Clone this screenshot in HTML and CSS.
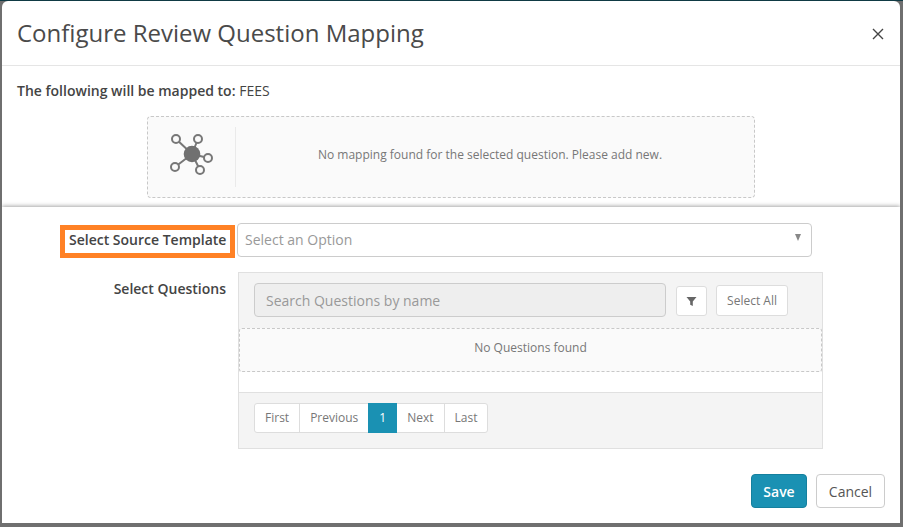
FILE: index.html
```html
<!DOCTYPE html>
<html lang="en">
<head>
<meta charset="utf-8">
<title>Configure Review Question Mapping</title>
<link rel="stylesheet" href="styles.css">
</head>
<body>
<div class="modal">
  <header class="modal-header">
    <h1 class="modal-title">Configure Review Question Mapping</h1>
    <svg class="close" width="12" height="12" viewBox="0 0 12 12"><path d="M1 1l10 10M11 1L1 11" stroke="#444" stroke-width="1.4" fill="none"/></svg>
  </header>
  <section class="summary">
    <p class="mapped"><strong>The following will be mapped to:</strong> FEES</p>
    <div class="mapping-box">
      <div class="mapping-icon">
        <svg width="50" height="46" viewBox="0 0 50 46">
          <g stroke="#777" stroke-width="2" fill="none">
            <path d="M24 20L8 5M24 20L30 5M24 20L40 24M24 20L7 33M24 20L32 36"/>
          </g>
          <g stroke="#777" stroke-width="2" fill="#fafafa">
            <circle cx="8" cy="5" r="4"/>
            <circle cx="30" cy="5" r="4"/>
            <circle cx="40" cy="24" r="4"/>
            <circle cx="7" cy="33" r="4"/>
            <circle cx="32" cy="36" r="4"/>
          </g>
          <circle cx="24" cy="20" r="8.3" fill="#707070"/>
        </svg>
      </div>
      <div class="mapping-text">No mapping found for the selected question. Please add new.</div>
    </div>
  </section>
  <section class="form">
    <div class="row row-source">
      <label class="label label-hl">Select Source Template</label>
      <div class="select"><span>Select an Option</span><i class="caret"></i></div>
    </div>
    <div class="row row-questions">
      <label class="label label-q">Select Questions</label>
      <div class="panel">
        <div class="panel-top">
          <div class="search">Search Questions by name</div>
          <button class="btn-icon" type="button" aria-label="Filter">
            <svg width="11" height="11" viewBox="0 0 11 11"><path d="M0.5 1h10L6.8 5.4V10L4.2 8.7V5.4z" fill="#666"/></svg>
          </button>
          <button class="btn-all" type="button">Select All</button>
        </div>
        <div class="empty">No Questions found</div>
        <div class="gap"></div>
        <div class="panel-foot">
          <nav class="pager">
            <a class="pg">First</a><a class="pg">Previous</a><a class="pg active">1</a><a class="pg">Next</a><a class="pg">Last</a>
          </nav>
        </div>
      </div>
    </div>
    <footer class="actions">
      <button class="btn save" type="button">Save</button>
      <button class="btn cancel" type="button">Cancel</button>
    </footer>
  </section>
</div>
</body>
</html>
```
FILE: styles.css
```css
* { box-sizing: border-box; }
html, body { margin: 0; height: 100%; }
body {
  background: linear-gradient(#0f3a44 0, #0f3a44 1px, #6f6f6f 1px);
  font-family: "Open Sans", "Liberation Sans", sans-serif;
  color: #444;
  overflow: hidden;
  padding: 1px 2px 4px 2px;
}
.modal {
  width: 898px;
  height: 522px;
  background: #fff;
  border-radius: 6px 6px 0 0;
  display: flex;
  flex-direction: column;
  overflow: hidden;
}
.modal-header {
  height: 65px;
  flex: none;
  border-bottom: 1px solid #e5e5e5;
  padding: 0 16px 0 15px;
  display: flex;
  align-items: center;
  justify-content: space-between;
}
.modal-title {
  margin: 0;
  font-size: 24px;
  font-weight: 400;
  line-height: 32px;
  color: #4a4a4a;
}
.close { flex: none; margin-top: 1px; }
.summary {
  height: 141px;
  flex: none;
  padding: 0 15px;
}
.mapped {
  margin: 0;
  padding-top: 16px;
  font-size: 14px;
  line-height: 18px;
  color: #444;
}
.mapped strong { font-weight: 600; }
.mapping-box {
  margin: 16px 0 0 130px;
  width: 608px;
  height: 82px;
  background: #fafafa;
  border: 1px dashed #c8c8c8;
  border-radius: 4px;
  display: flex;
  align-items: center;
}
.mapping-icon {
  width: 88px;
  height: 60px;
  flex: none;
  border-right: 1px solid #eaeaea;
  padding: 7px 0 0 20px;
}
.mapping-text {
  flex: 1;
  padding: 0 10px 6px 0;
  text-align: center;
  font-size: 12px;
  color: #777;
}
.form {
  flex: 1;
  display: flex;
  flex-direction: column;
  background: #fff;
  box-shadow: 0 -1px 4px rgba(0,0,0,.35);
  position: relative;
}
.row { display: flex; }
.row-source { padding: 16px 0 0 58px; }
.label {
  font-size: 14px;
  font-weight: 600;
  color: #444;
  line-height: 18px;
}
.label-hl {
  width: 175px;
  height: 33px;
  margin-top: 2px;
  border: 5px solid #ff8125;
  padding: 1px 4px 0 4px;
  text-align: right;
  white-space: nowrap;
  flex: none;
}
.select {
  width: 575px;
  height: 34px;
  margin-left: 2px;
  border: 1px solid #ccc;
  border-radius: 4px;
  padding: 0 10px 2px 7px;
  display: flex;
  align-items: center;
  justify-content: space-between;
  font-size: 14px;
  color: #999;
}
.caret {
  width: 0;
  height: 0;
  margin-bottom: 3px;
  border-left: 3.5px solid transparent;
  border-right: 3.5px solid transparent;
  border-top: 7px solid #888;
}
.row-questions { padding-top: 14px; }
.label-q {
  width: 224px;
  padding-top: 8px;
  text-align: right;
  flex: none;
}
.panel {
  width: 585px;
  height: 177px;
  margin-left: 12px;
  border: 1px solid #e0e0e0;
  background: #f4f4f4;
  display: flex;
  flex-direction: column;
}
.panel-top {
  height: 55px;
  flex: none;
  padding: 10px 0 0 15px;
  display: flex;
  align-items: flex-start;
}
.search {
  width: 412px;
  height: 34px;
  background: #eee;
  border: 1px solid #ccc;
  border-radius: 4px;
  padding: 0 11px;
  line-height: 33px;
  font-size: 14px;
  color: #999;
  flex: none;
}
.btn-icon {
  width: 31px;
  height: 30px;
  margin: 3px 0 0 10px;
  background: #fff;
  border: 1px solid #ddd;
  border-radius: 3px;
  padding: 0;
  display: flex;
  align-items: center;
  justify-content: center;
  flex: none;
}
.btn-all {
  width: 72px;
  height: 31px;
  margin: 2px 0 0 9px;
  background: #fff;
  border: 1px solid #ddd;
  border-radius: 3px;
  padding: 0;
  font: 400 12px "Open Sans", "Liberation Sans", sans-serif;
  color: #777;
  flex: none;
}
.empty {
  height: 44px;
  flex: none;
  background: #fafafa;
  border: 1px dashed #c8c8c8;
  border-radius: 3px;
  text-align: center;
  font-size: 12px;
  line-height: 38px;
  color: #777;
}
.gap { height: 20px; flex: none; background: #fff; }
.panel-foot {
  flex: 1;
  border-top: 1px solid #e0e0e0;
  padding: 10px 15px;
}
.pager {
  display: inline-flex;
  height: 30px;
  background: #fff;
  border: 1px solid #ddd;
  border-radius: 3px;
  font-size: 12px;
  color: #777;
}
.pg {
  height: 28px;
  line-height: 27px;
  padding: 0 10px;
  border-right: 1px solid #ddd;
}
.pg:last-child { border-right: 0; }
.pg.active {
  height: 30px;
  margin: -1px 0 -1px -1px;
  padding: 0 11px;
  line-height: 29px;
  background: #1a91b3;
  border-right: 0;
  color: #fff;
}
.actions {
  display: flex;
  justify-content: flex-end;
  gap: 9px;
  padding: 25px 15px 0 0;
}
.btn {
  height: 34px;
  border-radius: 4px;
  padding: 0;
  font: 400 14px "Open Sans", "Liberation Sans", sans-serif;
}
.save {
  width: 56px;
  background: #1a91b3;
  border: 1px solid #15809e;
  color: #fff;
  font-weight: 600;
}
.cancel {
  width: 69px;
  background: #fff;
  border: 1px solid #ccc;
  color: #555;
}
```
